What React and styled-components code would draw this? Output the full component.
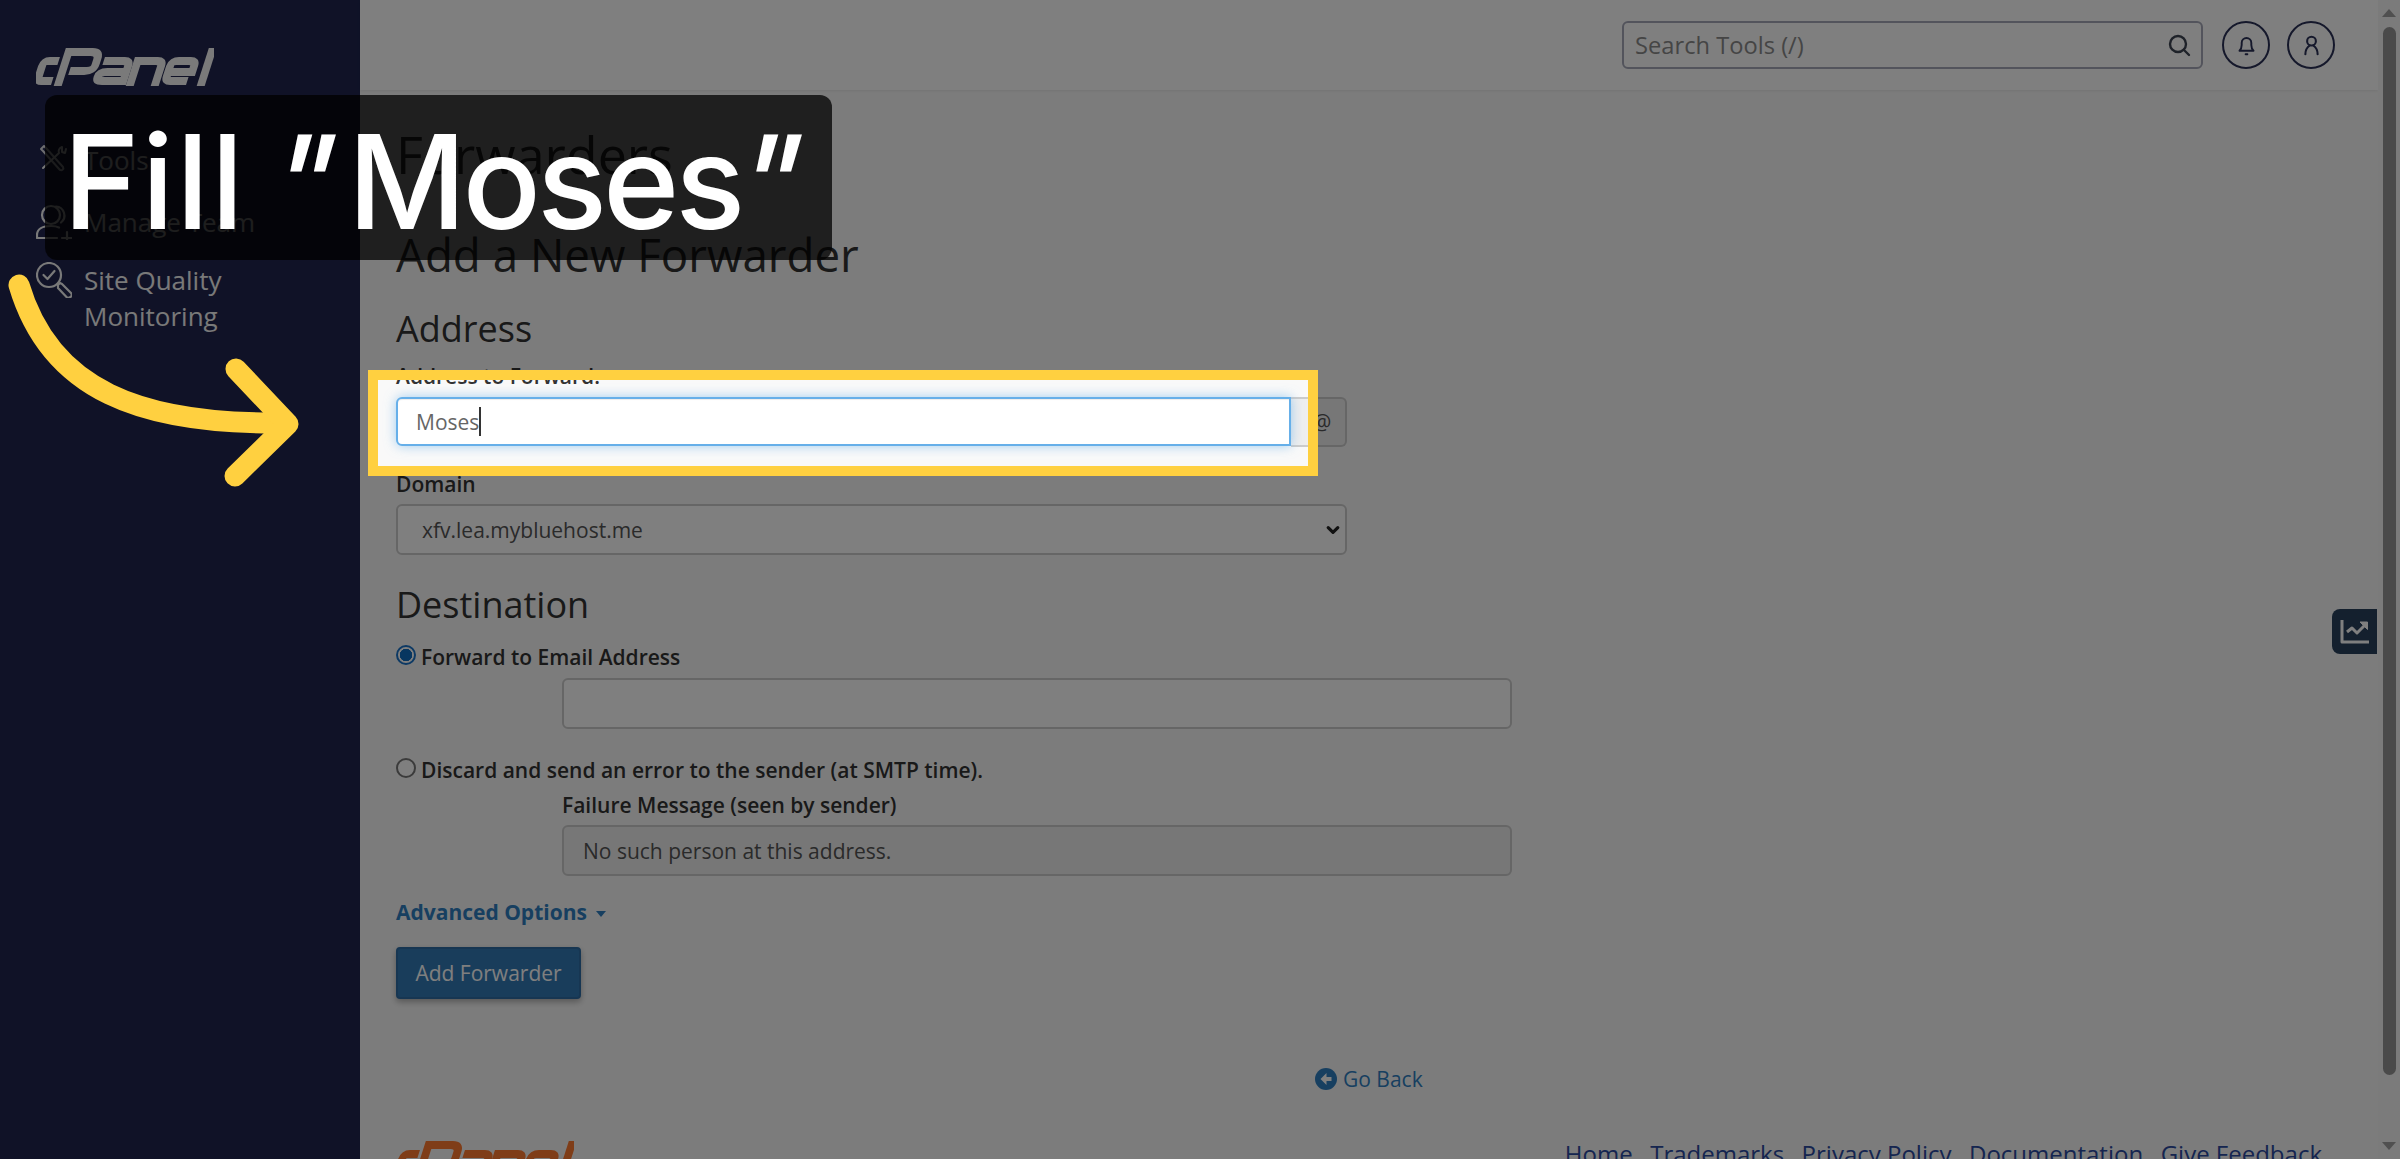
import React from "react";
import styled, { createGlobalStyle } from "styled-components";

const Global = createGlobalStyle`
  html, body { margin: 0; padding: 0; height: 1159px; overflow: hidden; background: #fff; }
  body { font-family: "Open Sans", "Noto Sans", sans-serif; color: #333; }
  * { box-sizing: border-box; }
`;

const Page = styled.div`
  display: flex;
  width: 2400px;
  height: 1159px;
  overflow: hidden;
  position: relative;
`;
const Sidebar = styled.aside`
  width: 360px;
  flex: none;
  background: #20254f;
  padding: 48px 0 0 36px;
  color: #fff;
  font-size: 26px;
`;
const LogoWrap = styled.div`
  height: 38px;
  margin-bottom: 56px;
  color: ${(p) => p.$color};
`;
const NavItem = styled.div`
  display: flex;
  gap: 12px;
  line-height: 36px;
  margin-bottom: ${(p) => p.$mb || 26}px;
  color: #f2f2f2;
`;
const NavIcon = styled.span`
  width: 36px;
  height: 36px;
  flex: none;
  display: block;
`;
const Main = styled.div`
  flex: 1;
  display: flex;
  flex-direction: column;
  min-width: 0;
  background: #f9f9f9;
`;
const Header = styled.header`
  height: 90px;
  flex: none;
  background: #fff;
  box-shadow: 0 1px 3px rgba(0,0,0,.08);
  display: flex;
  align-items: center;
  justify-content: flex-end;
  gap: 17px;
  padding: 0 43px 0 0;
`;
const Search = styled.div`
  width: 581px;
  height: 48px;
  border: 2px solid #a6a9b8;
  border-radius: 6px;
  display: flex;
  align-items: center;
  justify-content: space-between;
  padding: 0 10px 0 11px;
  font-size: 23.700px;
  color: #8b8b8b;
  background: #fff;
  margin-right: 2px;
`;
const RoundBtn = styled.div`
  width: 48px;
  height: 48px;
  border-radius: 50%;
  border: 2px solid #2b3157;
  display: flex;
  align-items: center;
  justify-content: center;
  color: #2b3157;
`;
const Content = styled.div`
  padding: 0 0 0 36px;
  position: relative;
  flex: 1;
`;
const H1 = styled.h1`
  font-size: 52px;
  font-weight: 400;
  line-height: 66px;
  margin: 31px 0 0;
  color: #333;
`;
const H2 = styled.h2`
  font-size: 45.700px;
  font-weight: 400;
  line-height: 54px;
  margin: 40px 0 0;
  color: #333;
`;
const H3 = styled.h3`
  font-size: 36px;
  font-weight: 400;
  line-height: 44px;
  margin: ${(p) => p.$mt}px 0 0;
  color: #333;
`;
const Label = styled.label`
  display: block;
  font-size: 21px;
  font-weight: 600;
  line-height: 30px;
  color: #333;
  margin: ${(p) => p.$mt || 0}px 0 ${(p) => p.$mb || 0}px ${(p) => p.$ml || 0}px;
`;
const Group = styled.div`
  display: flex;
  width: 951px;
  height: 49px;
`;
const TextInput = styled.div`
  flex: 1;
  height: 49px;
  border: 2px solid #66afe9;
  border-radius: 6px 0 0 6px;
  background: #fff;
  padding: 0 18px;
  font-size: 21px;
  display: flex;
  align-items: center;
  color: #666;
  box-shadow: inset 0 1px 1px rgba(0,0,0,.075), 0 0 12px rgba(102,175,233,.6);
  position: relative;
`;
const Caret = styled.span`
  width: 2px;
  height: 29px;
  background: #333;
`;
const Addon = styled.div`
  width: 56px;
  height: 50px;
  flex: none;
  background: #eee;
  border: 2px solid #ccc;
  border-left: none;
  border-radius: 0 6px 6px 0;
  display: flex;
  align-items: center;
  justify-content: center;
  font-size: 21px;
  color: #555;
  padding-left: 8px;
`;
const Select = styled.div`
  width: 951px;
  height: 51px;
  border: 2px solid #ccc;
  border-radius: 6px;
  background: #fff;
  display: flex;
  align-items: center;
  justify-content: space-between;
  padding: 0 4px 0 24px;
  font-size: 21px;
  color: #555;
`;
const RadioRow = styled.div`
  display: flex;
  align-items: center;
  gap: 5px;
  margin-top: ${(p) => p.$mt}px;
`;
const Radio = styled.span`
  width: 20px;
  height: 20px;
  border-radius: 50%;
  flex: none;
  border: 2px solid ${(p) => (p.$on ? "#1a73c8" : "#767676")};
  background: ${(p) => (p.$on ? "radial-gradient(circle, #0f6cc0 0 6px, #fff 6.500px)" : "#fff")};
  position: relative;
  top: -2px;
`;
const RadioText = styled.span`
  font-size: 21px;
  font-weight: 600;
  line-height: 30px;
`;
const WideInput = styled.div`
  width: 950px;
  height: 51px;
  margin: ${(p) => p.$mt || 0}px 0 0 166px;
  border: 2px solid #ccc;
  border-radius: 6px;
  background: ${(p) => (p.$disabled ? "#eee" : "#fff")};
  display: flex;
  align-items: center;
  padding: 0 19px;
  font-size: 21px;
  color: #555;
`;
const Advanced = styled.a`
  display: flex;
  align-items: center;
  gap: 9px;
  font-size: 21px;
  font-weight: 700;
  line-height: 30px;
  color: #2f7fc1;
  margin-top: 21px;
`;
const CaretDown = styled.span`
  width: 0;
  height: 0;
  border-left: 5px solid transparent;
  border-right: 5px solid transparent;
  border-top: 6px solid #2f7fc1;
  margin-top: 3px;
`;
const Button = styled.div`
  width: 185px;
  height: 52px;
  margin-top: 20px;
  background: #337ab7;
  border: 2px solid #2e6da4;
  border-radius: 4px;
  color: #fff;
  font-size: 21px;
  display: flex;
  align-items: center;
  justify-content: center;
  box-shadow: 0 3px 6px rgba(0,0,0,.3);
`;
const GoBackRow = styled.div`
  display: flex;
  align-items: center;
  gap: 6px;
  margin: 65px 0 0 919px;
  font-size: 21px;
  line-height: 30px;
  color: #2f7fc1;
`;
const Footer = styled.footer`
  display: flex;
  justify-content: space-between;
  align-items: flex-start;
  margin-top: 47px;
  padding-right: 56px;
`;
const FootLinks = styled.nav`
  display: flex;
  gap: 17.500px;
  font-size: 24px;
  line-height: 32px;
  color: #2b4aa0;
  margin-top: -3px;
`;
const FootLogo = styled.div`
  color: ${(p) => p.$color};
  height: 38px;
`;
const Scrollbar = styled.div`
  width: 22px;
  flex: none;
  background: #f6f6f6;
  display: flex;
  flex-direction: column;
  align-items: center;
  padding-top: 9px;
`;
const ArrowUp = styled.span`
  width: 0; height: 0;
  border-left: 7px solid transparent;
  border-right: 7px solid transparent;
  border-${(p) => (p.$down ? "top" : "bottom")}: 8px solid #a0a0a0;
`;
const Thumb = styled.div`
  width: 13px;
  height: 1048px;
  margin: 10px 0 67px;
  background: #949494;
  border-radius: 7px;
`;
const Widget = styled.div`
  position: absolute;
  left: 2332px;
  top: 609px;
  width: 45px;
  height: 45px;
  background: #28405c;
  border-radius: 8px 0 0 8px;
  display: flex;
  align-items: center;
  justify-content: center;
`;
const Spotlight = styled.div`
  position: absolute;
  left: 368px;
  top: 370px;
  width: 950px;
  height: 106px;
  border: 10px solid #ffd040;
  box-shadow: 0 0 0 4000px rgba(0,0,0,.5);
`;
const Curve = styled.svg`
  position: absolute;
  left: 0;
  top: 270px;
  width: 320px;
  height: 220px;
`;
const Title = styled.div`
  position: absolute;
  left: 45px;
  top: 95px;
  width: 787px;
  height: 165px;
  background: rgba(0,0,0,.75);
  border-radius: 12px;
  color: #fff;
  font-family: "Inter", "Open Sans", sans-serif;
  font-size: 130px;
  font-weight: 500;
  line-height: 173px;
  padding-left: 18px;
  white-space: nowrap;
`;
const Quote = styled.span`
  display: inline-block;
  transform: skewX(-14deg);
  margin: 0 ${(p) => p.$mr || 0}px 0 ${(p) => p.$ml || 0}px;
`;
const Verb = styled.span`
  letter-spacing: 2px;
`;
const Name = styled.span`
  letter-spacing: -4px;
`;

const CpanelLogo = () => (
  <svg width="178" height="38" viewBox="0 0 178 38" aria-label="cPanel logo" fill="none" stroke="currentColor" strokeWidth="8" style={{ display: "block" }}>
    <g transform="matrix(1 0 -0.32 1 11.84 0)">
      <path d="M15 13H5Q0 13 0 18V28Q0 33 5 33H15" />
      <path d="M22 38V4H45Q53 4 53 11V16Q53 23 45 23H29" />
      <path d="M60 13H80Q86 13 86 18V33H66Q59 33 59 28.500Q59 24 66 24H84" />
      <path d="M94 38V13H113Q119 13 119 18V38" />
      <path d="M128 24H152V18Q152 13 146 13H134Q128 13 128 18V28Q128 33 134 33H150" />
      <path d="M165 38V0" />
    </g>
  </svg>
);

const IconTools = () => (
  <svg width="36" height="36" viewBox="0 0 36 36" fill="none" stroke="currentColor" strokeWidth="2" strokeLinecap="round" strokeLinejoin="round">
    <path d="M5 7l3-3 2 2 17 19a2.200 2.200 0 0 1-3 3L7 9z" opacity=".9" />
    <path d="M26 5c-3 1-4 4-3 6l-16 15M26 5v5l3 1 1-4" />
  </svg>
);
const IconTeam = () => (
  <svg width="36" height="36" viewBox="0 0 36 36" fill="none" stroke="currentColor" strokeWidth="2.200" strokeLinecap="round">
    <circle cx="15" cy="11" r="9" />
    <path d="M20 2.500a9 9 0 0 1 5 16" />
    <path d="M1 34v-3c0-6 6-9 14-9 3 0 6 .5 8 1.500M1 34h20M26 34h10M31 28v8" />
  </svg>
);
const IconSite = () => (
  <svg width="36" height="36" viewBox="0 0 36 36" fill="none" stroke="currentColor" strokeWidth="2.200" strokeLinecap="round" strokeLinejoin="round">
    <circle cx="13" cy="13" r="12" />
    <path d="M7.500 13l4 4 7-8" />
    <path d="M22 23l2-2 2 1 9 9c1 1 1 3-.5 4s-3 1-4 0l-8.500-9z" />
  </svg>
);
const IconSearch = () => (
  <svg width="24" height="24" viewBox="0 0 24 24" fill="none" stroke="#3d4452" strokeWidth="2.400" strokeLinecap="round">
    <circle cx="11" cy="11" r="8" />
    <path d="M17 17l5 5" />
  </svg>
);
const IconBell = () => (
  <svg width="21" height="21" viewBox="0 0 24 24" fill="none" stroke="currentColor" strokeWidth="2.200" strokeLinecap="round" strokeLinejoin="round">
    <path d="M4 18h16c-1.500-1.500-2.500-3-2.500-6.500V9a5.500 5.500 0 0 0-11 0v2.500C6.500 15 5.500 16.500 4 18z" />
    <path d="M11 22h2" />
  </svg>
);
const IconUser = () => (
  <svg width="21" height="21" viewBox="0 0 24 24" fill="none" stroke="currentColor" strokeWidth="2.400" strokeLinecap="round">
    <circle cx="12" cy="7" r="5" />
    <path d="M5 22c0-4 2-8 5-10M19 22c0-4-2-8-5-10" />
  </svg>
);
const IconChart = () => (
  <svg width="32" height="28" viewBox="0 0 32 28" fill="none" stroke="#fff" strokeWidth="3" strokeLinejoin="round">
    <path d="M3 2v22h27" />
    <path d="M8 14l5-4 5 5 9-9" />
    <path d="M21 4h7.500v7.500z" fill="#fff" strokeWidth="1" />
  </svg>
);
const IconBack = () => (
  <svg width="22" height="22" viewBox="0 0 22 22">
    <circle cx="11" cy="11" r="11" fill="#2f7fc1" />
    <path d="M11.500 5l-6 6 6 6V13h5V9h-5z" fill="#fff" />
  </svg>
);
const Chevron = () => (
  <svg width="16" height="16" viewBox="0 0 20 20" fill="none" stroke="#222" strokeWidth="4" strokeLinecap="round" strokeLinejoin="round">
    <path d="M4 7l6 6 6-6" />
  </svg>
);

export default function App() {
  return (
    <>
      <Global />
      <Page>
        <Sidebar>
          <LogoWrap $color="#f4f4f4"><CpanelLogo /></LogoWrap>
          <NavItem><NavIcon><IconTools /></NavIcon>Tools</NavItem>
          <NavItem $mb={22}><NavIcon><IconTeam /></NavIcon>Manage Team</NavItem>
          <NavItem><NavIcon><IconSite /></NavIcon><span>Site Quality<br />Monitoring</span></NavItem>
        </Sidebar>
        <Main>
          <Header>
            <Search>Search Tools (/)<IconSearch /></Search>
            <RoundBtn><IconBell /></RoundBtn>
            <RoundBtn><IconUser /></RoundBtn>
          </Header>
          <Content>
            <H1>Forwarders</H1>
            <H2>Add a New Forwarder</H2>
            <H3 $mt={26}>Address</H3>
            <Label $mt={10} $mb={6}>Address to Forward:</Label>
            <Group>
              <TextInput>Moses<Caret /></TextInput>
              <Addon>@</Addon>
            </Group>
            <Label $mt={23} $mb={5}>Domain</Label>
            <Select>xfv.lea.mybluehost.me<Chevron /></Select>
            <H3 $mt={28}>Destination</H3>
            <RadioRow $mt={15}><Radio $on /><RadioText>Forward to Email Address</RadioText></RadioRow>
            <WideInput $mt={6} />
            <RadioRow $mt={26}><Radio /><RadioText>Discard and send an error to the sender (at SMTP time).</RadioText></RadioRow>
            <Label $mt={5} $mb={5} $ml={166}>Failure Message (seen by sender)</Label>
            <WideInput $disabled>No such person at this address.</WideInput>
            <Advanced>Advanced Options<CaretDown /></Advanced>
            <Button>Add Forwarder</Button>
            <GoBackRow><IconBack />Go Back</GoBackRow>
            <Footer>
              <FootLogo $color="#ff7a30"><CpanelLogo /></FootLogo>
              <FootLinks><span>Home</span><span>Trademarks</span><span>Privacy Policy</span><span>Documentation</span><span>Give Feedback</span></FootLinks>
            </Footer>
          </Content>
        </Main>
        <Scrollbar><ArrowUp /><Thumb /><ArrowUp $down /></Scrollbar>
        <Widget><IconChart /></Widget>
        <Spotlight />
        <Curve viewBox="0 270 320 220" fill="none" stroke="#ffd040" strokeWidth="21" strokeLinecap="round" strokeLinejoin="round">
          <path d="M19 285C50 390 140 425 285 423" />
          <path d="M236 369L288 424L235 476" />
        </Curve>
        <Title><Verb>Fill</Verb> <Quote $ml={-8} $mr={11}>"</Quote><Name>Moses</Name><Quote $ml={-2}>"</Quote></Title>
      </Page>
    </>
  );
}
